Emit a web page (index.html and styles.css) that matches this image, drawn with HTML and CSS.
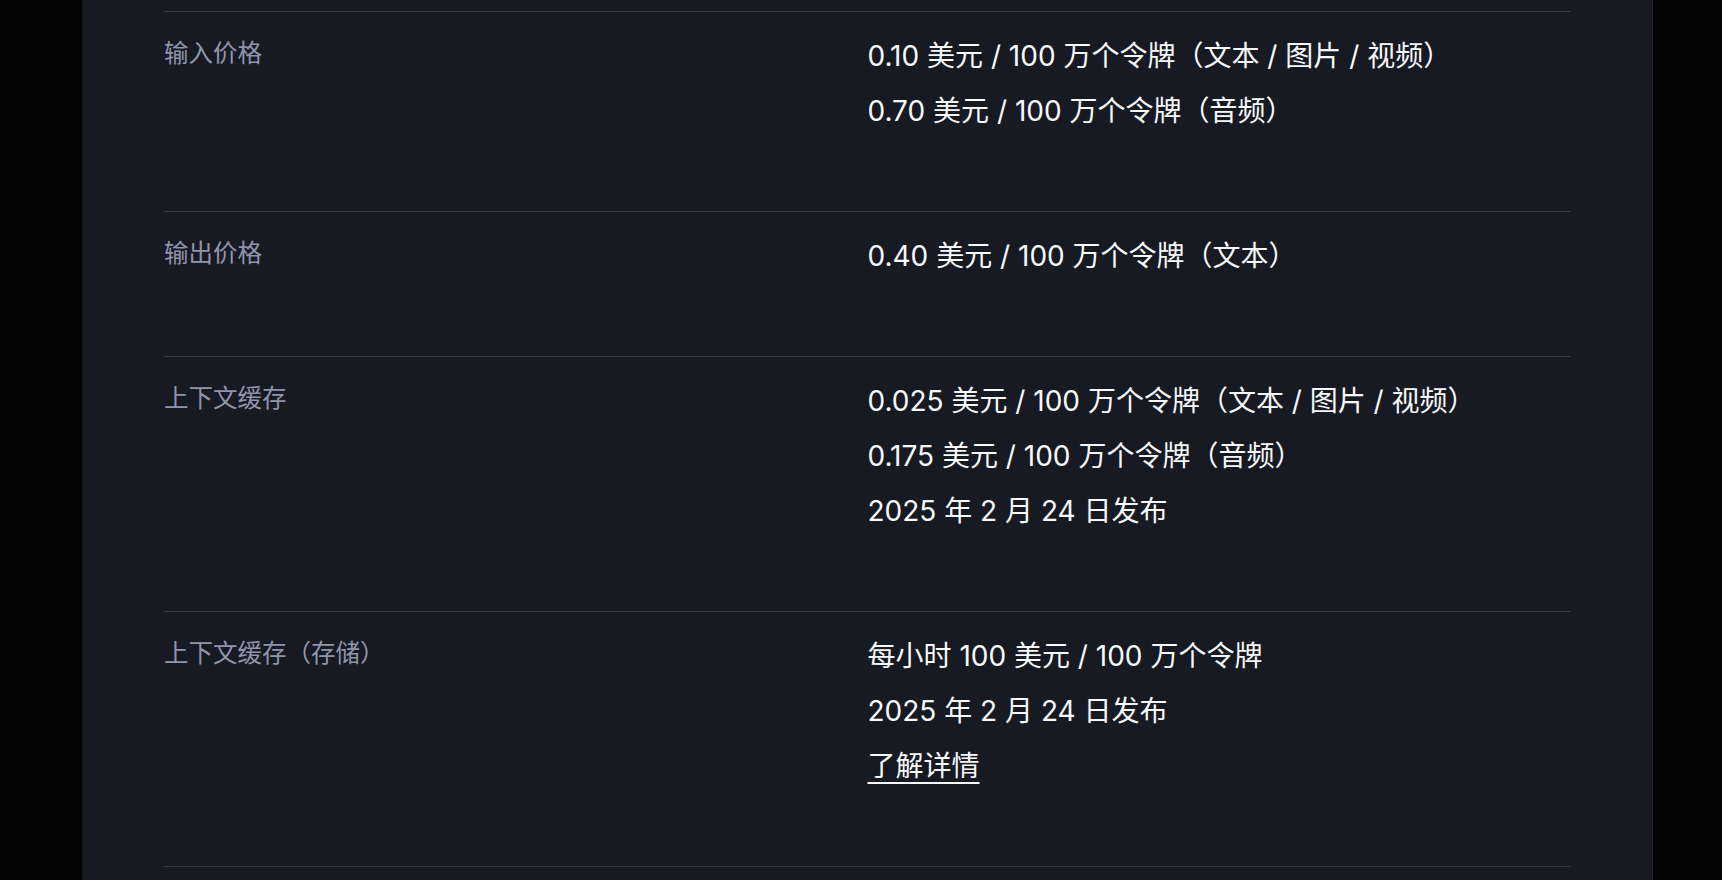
FILE: index.html
```html
<!DOCTYPE html>
<html lang="zh-CN">
<head>
<meta charset="utf-8">
<title>价格</title>
<link rel="stylesheet" href="styles.css">
</head>
<body>
<div class="page">
  <section class="panel">
    <div class="list">
      <div class="row">
        <div class="label">输入价格</div>
        <div class="value">
          <p>0.10 美元 / 100 万个令牌（文本 / 图片 / 视频）</p>
          <p>0.70 美元 / 100 万个令牌（音频）</p>
        </div>
      </div>
      <div class="row">
        <div class="label">输出价格</div>
        <div class="value">
          <p>0.40 美元 / 100 万个令牌（文本）</p>
        </div>
      </div>
      <div class="row">
        <div class="label">上下文缓存</div>
        <div class="value">
          <p>0.025 美元 / 100 万个令牌（文本 / 图片 / 视频）</p>
          <p>0.175 美元 / 100 万个令牌（音频）</p>
          <p>2025 年 2 月 24 日发布</p>
        </div>
      </div>
      <div class="row">
        <div class="label">上下文缓存（存储）</div>
        <div class="value">
          <p>每小时 100 美元 / 100 万个令牌</p>
          <p>2025 年 2 月 24 日发布</p>
          <p><a class="link" href="#">了解详情</a></p>
        </div>
      </div>
    </div>
  </section>
</div>
</body>
</html>
```
FILE: styles.css
```css
*, *::before, *::after {
  box-sizing: border-box;
}

html, body {
  margin: 0;
  padding: 0;
  background: #030303;
  height: 100%;
  overflow: hidden;
}

body {
  font-family: "Inter", "Noto Sans CJK SC", sans-serif;
  -webkit-font-smoothing: antialiased;
}

.page {
  display: flex;
  height: 100vh;
}

.panel {
  margin-left: 82px;
  width: 1571px;
  padding: 11px 81px 0 82px;
  background: #171923;
  border-right: 1px solid #1f2331;
}

.list {
  border-bottom: 1px solid #343746;
}

.row {
  display: grid;
  grid-template-columns: 1fr 1fr;
  border-top: 1px solid #343746;
  padding: 17px 0 72px 0;
}

.label {
  color: #8f96ab;
  font-size: 24.5px;
  line-height: 48px;
}

.value {
  color: #f8f9fa;
  font-size: 28px;
  line-height: 55px;
}

.value p {
  margin: 0;
}

.link {
  color: #f8f9fa;
  text-decoration: underline;
  text-decoration-thickness: 2px;
  text-underline-offset: 6px;
}
```
